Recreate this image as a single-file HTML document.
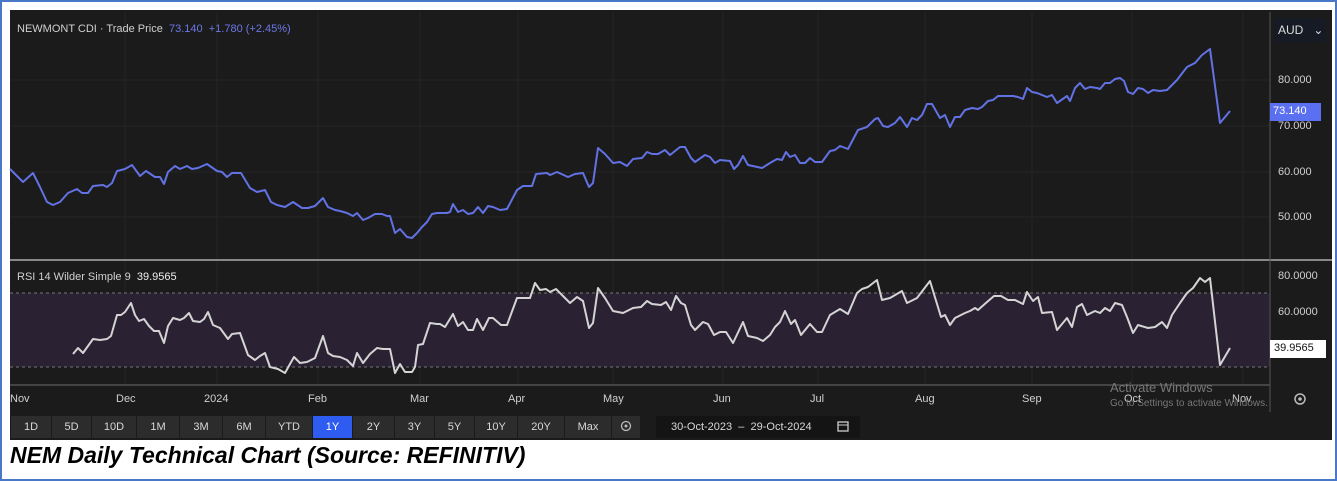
<!DOCTYPE html>
<html><head><meta charset="utf-8"><style>
html,body{margin:0;padding:0;width:1337px;height:481px;background:#fff;overflow:hidden}
.frame{position:absolute;left:0;top:0;width:1333px;height:477px;border:2px solid #4a78c8;background:#fff}
.chart{position:absolute;left:10px;top:10px;width:1322px;height:430px;background:#1b1b1b}
.t{position:absolute;font-family:"Liberation Sans",sans-serif;font-size:11px;color:#d0d0d0;white-space:nowrap}
.btn{position:absolute;top:416px;height:22px;background:#2c2c2c;color:#d8d8d8;font:11px "Liberation Sans",sans-serif;text-align:center;line-height:22px}
.cap{position:absolute;left:10px;top:442px;font:italic bold 23px "Liberation Sans",sans-serif;color:#000}
</style></head><body>
<div class="frame"></div>
<div class="chart"></div>
<svg width="1337" height="481" style="position:absolute;left:0;top:0">
<g stroke="#262626" stroke-width="1">
<line x1="10" y1="80" x2="1270" y2="80"/><line x1="10" y1="126" x2="1270" y2="126"/><line x1="10" y1="172" x2="1270" y2="172"/><line x1="10" y1="217" x2="1270" y2="217"/>
<line x1="125" y1="12" x2="125" y2="384"/><line x1="217" y1="12" x2="217" y2="384"/><line x1="318" y1="12" x2="318" y2="384"/><line x1="420" y1="12" x2="420" y2="384"/><line x1="518" y1="12" x2="518" y2="384"/><line x1="613" y1="12" x2="613" y2="384"/><line x1="723" y1="12" x2="723" y2="384"/><line x1="818" y1="12" x2="818" y2="384"/><line x1="925" y1="12" x2="925" y2="384"/><line x1="1032" y1="12" x2="1032" y2="384"/><line x1="1132" y1="12" x2="1132" y2="384"/><line x1="1243" y1="12" x2="1243" y2="384"/>
</g>
<rect x="10" y="293" width="1260" height="74" fill="#2a2233"/>
<line x1="10" y1="293" x2="1270" y2="293" stroke="#777" stroke-dasharray="3,3"/>
<line x1="10" y1="367" x2="1270" y2="367" stroke="#777" stroke-dasharray="3,3"/>
<line x1="10" y1="260" x2="1332" y2="260" stroke="#888" stroke-width="2"/>
<line x1="10" y1="385" x2="1270" y2="385" stroke="#444" stroke-width="2"/>
<line x1="1270" y1="12" x2="1270" y2="412" stroke="#555"/>
<polyline fill="none" stroke="#6272e4" stroke-width="2" stroke-linejoin="round" points="10,169 23,182 33,173 40,187 47,202 53,205 60,202 68,193 77,189 82,193 88,193 93,186 103,185 107,187 112,183 117,171 125,169 132,165 140,176 146,171 155,177 160,177 164,184 168,172 175,166 180,169 187,166 192,169 198,168 207,164 217,171 222,172 227,177 232,173 241,173 250,188 257,192 265,190 271,202 277,205 285,207 293,202 302,208 308,208 315,206 323,198 328,207 335,210 340,211 347,213 353,216 357,213 363,220 368,218 375,214 382,214 387,216 390,216 395,233 400,229 407,237 412,238 417,233 422,227 427,222 432,214 437,213 447,213 450,212 453,204 458,212 463,210 468,214 473,213 478,207 483,213 488,206 493,207 500,210 507,209 517,190 523,186 532,186 536,174 547,173 550,175 557,172 568,177 575,174 583,173 589,187 593,183 598,148 605,154 613,163 620,162 627,166 633,159 642,158 647,152 652,154 658,154 665,150 670,155 680,147 685,147 691,158 695,162 705,155 710,157 715,163 720,160 730,161 734,169 738,165 743,156 748,165 762,168 770,163 777,159 782,160 786,152 790,157 795,155 800,163 805,163 810,158 815,162 822,162 830,151 835,150 840,146 848,149 858,130 867,127 875,119 878,118 883,126 888,127 895,123 900,117 907,127 912,118 917,120 922,115 927,104 932,104 940,118 945,115 950,127 955,117 960,117 965,110 972,108 978,109 982,107 988,101 993,100 998,96 1013,96 1018,97 1023,99 1027,88 1032,92 1037,93 1047,97 1052,95 1057,103 1067,96 1070,101 1075,88 1080,83 1085,89 1090,87 1097,88 1100,89 1105,83 1110,83 1115,79 1120,78 1124,81 1128,92 1133,94 1138,88 1143,89 1148,93 1153,90 1160,91 1167,90 1177,80 1187,67 1195,63 1202,55 1210,49 1220,123 1230,111"/>
<polyline fill="none" stroke="#d4d4d4" stroke-width="2" stroke-linejoin="round" points="73,354 78,348 83,353 88,346 93,339 100,340 107,339 111,336 117,315 121,315 125,312 131,303 135,315 139,321 144,319 149,326 154,331 159,331 164,343 168,326 173,318 180,320 184,318 189,313 193,321 200,322 204,319 208,312 213,325 220,328 228,339 232,334 240,333 248,355 255,360 260,356 265,353 270,367 278,369 285,373 290,364 294,357 300,363 307,362 315,358 323,336 328,353 333,356 340,357 347,360 353,366 357,353 363,363 370,354 377,348 383,349 390,349 395,373 400,364 405,372 412,372 415,367 418,345 423,344 430,323 437,324 440,324 445,327 453,314 458,326 463,322 468,330 473,330 477,319 483,330 489,318 493,318 501,325 507,325 517,298 530,298 535,283 540,290 546,289 550,292 556,289 562,295 570,303 577,297 583,301 589,328 593,323 598,288 605,298 613,311 623,313 633,308 641,307 647,301 652,304 661,305 666,302 671,310 676,296 681,303 685,305 691,325 695,330 703,322 708,324 714,335 720,332 726,332 733,343 743,322 748,336 757,338 763,341 770,335 775,327 780,322 785,311 791,324 795,320 801,335 810,324 817,332 822,332 830,315 840,309 848,314 857,293 862,289 868,287 877,280 882,300 890,298 902,291 907,303 917,298 930,281 941,317 945,315 950,325 955,318 965,313 970,311 975,308 978,310 987,302 994,296 1001,296 1008,300 1015,300 1023,304 1027,292 1033,301 1038,297 1042,313 1052,312 1057,330 1067,318 1072,327 1077,307 1082,304 1087,315 1095,311 1100,313 1105,308 1110,311 1115,303 1122,305 1127,317 1133,333 1138,325 1148,328 1155,327 1162,322 1167,328 1172,315 1180,303 1187,293 1193,288 1200,278 1205,282 1210,278 1220,365 1230,348"/>
<rect x="1274" y="18" width="52" height="24" rx="2" fill="#151a24"/>
<rect x="1270" y="103" width="51" height="18" fill="#5b70f0"/>
<rect x="1270" y="340" width="56" height="18" fill="#fff"/>
<circle cx="1300" cy="399" r="5" fill="none" stroke="#bbb" stroke-width="1.5"/><circle cx="1300" cy="399" r="1.8" fill="#bbb"/>
</svg>
<div class="t" style="left:17px;top:23px">NEWMONT CDI · Trade Price &nbsp;<span style="color:#6b78e6">73.140 &nbsp;+1.780 (+2.45%)</span></div>
<div class="t" style="left:17px;top:271px">RSI 14 Wilder Simple 9 &nbsp;<span style="color:#eee">39.9565</span></div>
<div class="t" style="left:1278px;top:23px;font-size:12px;color:#ddd">AUD &nbsp;&nbsp;⌄</div>
<div class="t" style="left:1278px;top:74px">80.000</div>
<div class="t" style="left:1273px;top:105px;color:#fff">73.140</div>
<div class="t" style="left:1278px;top:120px">70.000</div>
<div class="t" style="left:1278px;top:166px">60.000</div>
<div class="t" style="left:1278px;top:211px">50.000</div>
<div class="t" style="left:1278px;top:270px">80.0000</div>
<div class="t" style="left:1278px;top:306px">60.0000</div>
<div class="t" style="left:1274px;top:342px;color:#111">39.9565</div>
<div class="t" style="left:10px;top:393px">Nov</div>
<div class="t" style="left:116px;top:393px">Dec</div>
<div class="t" style="left:204px;top:393px">2024</div>
<div class="t" style="left:308px;top:393px">Feb</div>
<div class="t" style="left:410px;top:393px">Mar</div>
<div class="t" style="left:508px;top:393px">Apr</div>
<div class="t" style="left:603px;top:393px">May</div>
<div class="t" style="left:713px;top:393px">Jun</div>
<div class="t" style="left:810px;top:393px">Jul</div>
<div class="t" style="left:915px;top:393px">Aug</div>
<div class="t" style="left:1022px;top:393px">Sep</div>
<div class="t" style="left:1124px;top:393px">Oct</div>
<div class="t" style="left:1232px;top:393px">Nov</div>
<div class="t" style="left:1110px;top:380px;font-size:13px;color:#777">Activate Windows</div>
<div class="t" style="left:1110px;top:398px;font-size:10px;color:#777">Go to Settings to activate Windows.</div>
<div class="btn" style="left:11px;width:40px">1D</div>
<div class="btn" style="left:52px;width:39px">5D</div>
<div class="btn" style="left:92px;width:44px">10D</div>
<div class="btn" style="left:137px;width:42px">1M</div>
<div class="btn" style="left:180px;width:42px">3M</div>
<div class="btn" style="left:223px;width:42px">6M</div>
<div class="btn" style="left:266px;width:46px">YTD</div>
<div class="btn" style="left:313px;width:39px;background:#2f5cf0;color:#fff">1Y</div>
<div class="btn" style="left:353px;width:41px">2Y</div>
<div class="btn" style="left:395px;width:39px">3Y</div>
<div class="btn" style="left:435px;width:39px">5Y</div>
<div class="btn" style="left:475px;width:42px">10Y</div>
<div class="btn" style="left:518px;width:46px">20Y</div>
<div class="btn" style="left:565px;width:46px">Max</div>
<div class="btn" style="left:612px;width:28px"></div>
<div class="btn" style="left:656px;width:204px;background:#141414;text-align:left;padding-left:15px;box-sizing:border-box">30-Oct-2023 &nbsp;– &nbsp;29-Oct-2024</div>
<svg width="30" height="22" style="position:absolute;left:612px;top:416px"><circle cx="14" cy="10" r="4.5" fill="none" stroke="#bbb" stroke-width="1.3"/><circle cx="14" cy="10" r="1.5" fill="#bbb"/></svg>
<svg width="14" height="14" style="position:absolute;left:837px;top:420px"><rect x="1" y="2" width="10" height="9" fill="none" stroke="#ccc" stroke-width="1.3"/><line x1="1" y1="5" x2="11" y2="5" stroke="#ccc"/></svg>
<div class="cap">NEM Daily Technical Chart (Source: REFINITIV)</div>
</body></html>
